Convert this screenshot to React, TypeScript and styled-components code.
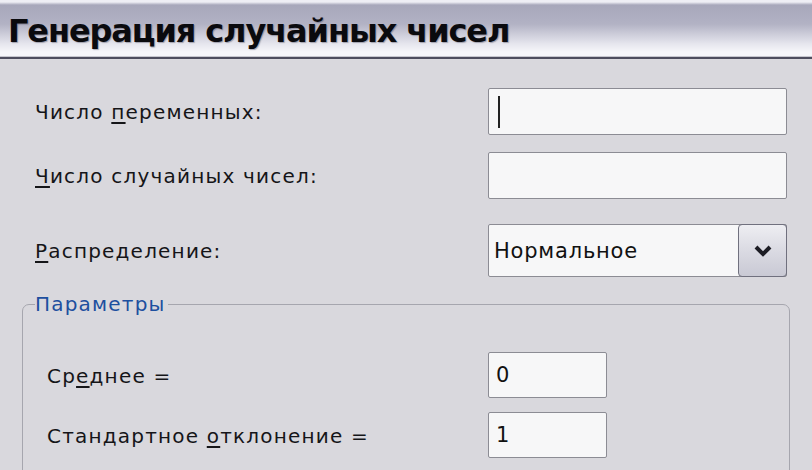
import styled, { createGlobalStyle } from 'styled-components';

const GlobalStyle = createGlobalStyle`
  html, body {
    margin: 0;
    padding: 0;
    background: #d9d8dd;
    overflow: hidden;
  }
  body {
    font-family: "DejaVu Sans", "Liberation Sans", sans-serif;
  }
`;

const Window = styled.div`
  width: 812px;
  height: 470px;
  background: #d9d8dd;
  overflow: hidden;
`;

const TitleBar = styled.div`
  height: 56px;
  display: flex;
  align-items: center;
  padding-left: 8px;
  background: linear-gradient(
    to bottom,
    #eeeef5 0px,
    #eeeef5 2px,
    #a7a7bb 5px,
    #b2b2c4 24px,
    #e6e6ee 44px,
    #f6f6fa 52px
  );
  border-bottom: 1px solid #c6c6ce;
  box-shadow: 0 2px 0 #4d4d5e;
  margin-bottom: 2px;
`;

const Title = styled.h1`
  margin: 0;
  padding-top: 6px;
  font-family: "DejaVu Sans", sans-serif;
  font-weight: bold;
  font-size: 32px;
  color: #0a0a0e;
  text-shadow: 1px 1px 1px rgba(80, 80, 100, 0.45);
  letter-spacing: -1.1px;
`;

const Form = styled.div`
  padding: 29px 0 0 35px;
  display: flex;
  flex-direction: column;
`;

const Row = styled.div<{ $h: number; $gap: number }>`
  display: flex;
  align-items: center;
  height: ${(p) => p.$h}px;
  margin-bottom: ${(p) => p.$gap}px;
`;

const Label = styled.div<{ $w: number }>`
  width: ${(p) => p.$w}px;
  font-size: 20px;
  color: #151518;
  letter-spacing: 1.2px;
  padding-top: 1px;

  u {
    text-decoration-thickness: 2px;
    text-underline-offset: 3px;
  }
`;

const Field = styled.div<{ $w: number }>`
  box-sizing: border-box;
  width: ${(p) => p.$w}px;
  height: 100%;
  background: #f7f7f8;
  border: 1px solid #8c8c94;
  border-radius: 2px;
  display: flex;
  align-items: center;
  padding-left: 7px;
  font-size: 21px;
  letter-spacing: 0.8px;
  color: #111;
`;

const Caret = styled.span`
  display: block;
  width: 2px;
  height: 32px;
  background: #222;
  margin-left: 2px;
`;

const Select = styled.div`
  box-sizing: border-box;
  width: 299px;
  height: 100%;
  display: flex;
  background: #f7f7f8;
  border: 1px solid #8c8c94;
  border-radius: 2px;
`;

const SelectValue = styled.div`
  flex: 1;
  display: flex;
  align-items: center;
  padding-left: 5px;
  font-size: 21px;
  letter-spacing: 0.8px;
  color: #111;
`;

const DropButton = styled.div`
  box-sizing: border-box;
  width: 49px;
  margin: -1px -1px -1px 0;
  border: 1px solid #70707e;
  border-radius: 4px;
  background: linear-gradient(to bottom, #eeeef2 0%, #dcdce4 45%, #c9c9d4 100%);
  display: flex;
  align-items: center;
  justify-content: center;
`;

const Group = styled.fieldset`
  margin: 15px 0 0 22px;
  width: 768px;
  height: 220px;
  box-sizing: border-box;
  border: 1px solid #a6a6ae;
  border-radius: 7px;
  padding: 36px 0 0 24px;
  display: flex;
  flex-direction: column;
`;

const Legend = styled.legend`
  font-size: 20px;
  letter-spacing: 1.2px;
  color: #1d4f9f;
  padding: 0 2px 0 0;
  margin-left: -12px;
`;

export default function App() {
  return (
    <Window>
      <GlobalStyle />
      <TitleBar>
        <Title>Генерация случайных чисел</Title>
      </TitleBar>
      <Form>
        <Row $h={47} $gap={17}>
          <Label $w={453}>
            Число <u>п</u>еременных:
          </Label>
          <Field $w={299}>
            <Caret />
          </Field>
        </Row>
        <Row $h={47} $gap={25}>
          <Label $w={453}>
            <u>Ч</u>исло случайных чисел:
          </Label>
          <Field $w={299} />
        </Row>
        <Row $h={53} $gap={0}>
          <Label $w={453}>
            <u>Р</u>аспределение:
          </Label>
          <Select>
            <SelectValue>Нормальное</SelectValue>
            <DropButton>
              <svg width="20" height="14" viewBox="0 0 20 14">
                <polyline
                  points="3,3 10,10 17,3"
                  fill="none"
                  stroke="#1c1c24"
                  strokeWidth="4"
                  strokeLinejoin="miter"
                />
              </svg>
            </DropButton>
          </Select>
        </Row>
      </Form>
      <Group>
        <Legend>Параметры</Legend>
        <Row $h={46} $gap={14}>
          <Label $w={441}>
            Ср<u>е</u>днее =
          </Label>
          <Field $w={119}>0</Field>
        </Row>
        <Row $h={46} $gap={0}>
          <Label $w={441}>
            Стандартное <u>о</u>тклонение =
          </Label>
          <Field $w={119}>1</Field>
        </Row>
      </Group>
    </Window>
  );
}
